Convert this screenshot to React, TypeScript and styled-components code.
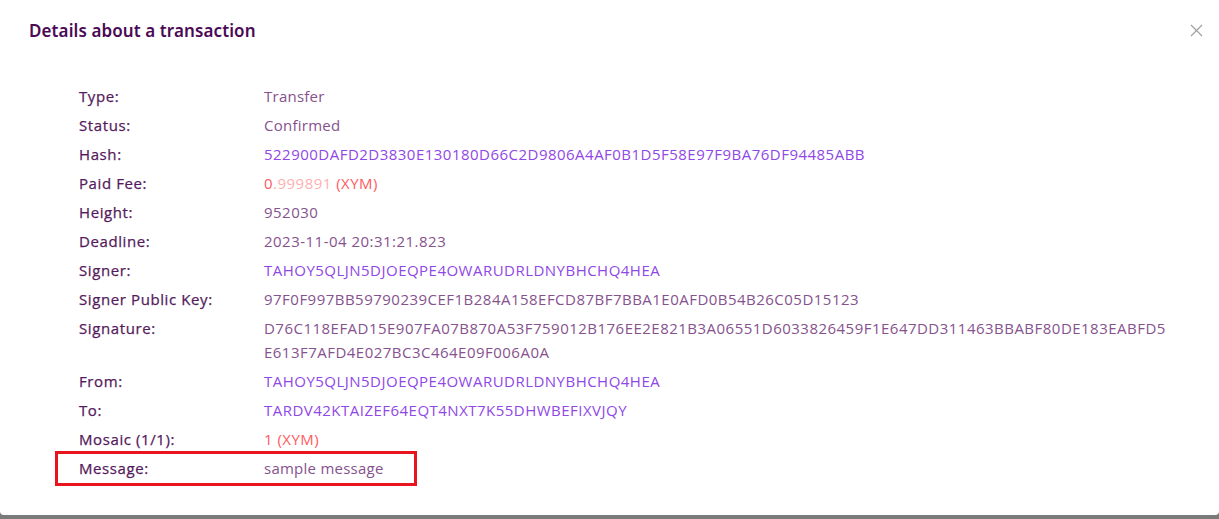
import React from "react";
import styled, { createGlobalStyle } from "styled-components";

const Global = createGlobalStyle`
  html, body { margin: 0; padding: 0; }
  body {
    background: #7a7a7a;
    font-family: "Open Sans", "Noto Sans", sans-serif;
    width: 1219px;
    height: 519px;
    overflow: hidden;
  }
`;

const Dialog = styled.div`
  background: #ffffff;
  height: 515px;
  border-radius: 0 0 4px 4px;
  box-sizing: border-box;
  display: flex;
  flex-direction: column;
`;

const Header = styled.div`
  display: flex;
  align-items: center;
  justify-content: space-between;
  padding: 18px 16px 0 29px;
  height: 25px;
`;

const Title = styled.h2`
  margin: 0;
  font-family: "Noto Sans", "Open Sans", sans-serif;
  font-size: 17px;
  font-weight: 600;
  letter-spacing: 0.1px;
  color: #4a0a55;
  line-height: 25px;
`;

const Close = styled.button`
  border: none;
  background: none;
  padding: 0;
  width: 14px;
  height: 14px;
  display: flex;
  align-items: center;
  justify-content: center;
  cursor: pointer;
`;

const Body = styled.div`
  padding: 41px 40px 0 79px;
  display: flex;
  flex-direction: column;
  gap: 5px;
`;

const Row = styled.div`
  display: grid;
  grid-template-columns: 185px 909px;
  font-size: 15px;
  line-height: 24px;
  position: relative;
`;

const Label = styled.div`
  color: #541a5c;
  letter-spacing: 0.6px;
  -webkit-text-stroke: 0.25px #541a5c;
`;

const Value = styled.div<{ $tone?: "plain" | "link" | "red"; $code?: boolean }>`
  color: ${(p) =>
    p.$tone === "link" ? "#8f47e6" : p.$tone === "red" ? "#ff5a5f" : "#86528e"};
  letter-spacing: ${(p) => (p.$code ? "0.48px" : "0.25px")};
  word-break: break-all;
`;

const Faint = styled.span`
  color: #ffb0b0;
`;

const Highlight = styled.div`
  position: absolute;
  left: -24px;
  top: -5px;
  width: 362px;
  height: 35px;
  border: 3px solid #e8141e;
  box-sizing: border-box;
  pointer-events: none;
`;

type Item = {
  label: string;
  value: React.ReactNode;
  tone?: "plain" | "link" | "red";
  code?: boolean;
  highlight?: boolean;
};

const items: Item[] = [
  { label: "Type:", value: "Transfer" },
  { label: "Status:", value: "Confirmed" },
  {
    label: "Hash:",
    value: "522900DAFD2D3830E130180D66C2D9806A4AF0B1D5F58E97F9BA76DF94485ABB",
    tone: "link",
    code: true,
  },
  {
    label: "Paid Fee:",
    value: (
      <>
        0<Faint>.999891</Faint> (XYM)
      </>
    ),
    tone: "red",
    code: true,
  },
  { label: "Height:", value: "952030", code: true },
  { label: "Deadline:", value: "2023-11-04 20:31:21.823", code: true },
  { label: "Signer:", value: "TAHOY5QLJN5DJOEQPE4OWARUDRLDNYBHCHQ4HEA", tone: "link", code: true },
  {
    label: "Signer Public Key:",
    value: "97F0F997BB59790239CEF1B284A158EFCD87BF7BBA1E0AFD0B54B26C05D15123",
    code: true,
  },
  {
    label: "Signature:",
    value:
      "D76C118EFAD15E907FA07B870A53F759012B176EE2E821B3A06551D6033826459F1E647DD311463BBABF80DE183EABFD5E613F7AFD4E027BC3C464E09F006A0A",
    code: true,
  },
  { label: "From:", value: "TAHOY5QLJN5DJOEQPE4OWARUDRLDNYBHCHQ4HEA", tone: "link", code: true },
  { label: "To:", value: "TARDV42KTAIZEF64EQT4NXT7K55DHWBEFIXVJQY", tone: "link", code: true },
  { label: "Mosaic (1/1):", value: "1 (XYM)", tone: "red", code: true },
  { label: "Message:", value: "sample message", highlight: true },
];

export default function App() {
  return (
    <>
      <Global />
      <Dialog>
        <Header>
          <Title>Details about a transaction</Title>
          <Close aria-label="Close">
            <svg width="13" height="13" viewBox="0 0 13 13">
              <path d="M1 1 L12 12 M12 1 L1 12" stroke="#a0a0a0" strokeWidth="1.2" />
            </svg>
          </Close>
        </Header>
        <Body>
          {items.map((it) => (
            <Row key={it.label}>
              <Label>{it.label}</Label>
              <Value $tone={it.tone} $code={it.code}>
                {it.value}
              </Value>
              {it.highlight && <Highlight />}
            </Row>
          ))}
        </Body>
      </Dialog>
    </>
  );
}
